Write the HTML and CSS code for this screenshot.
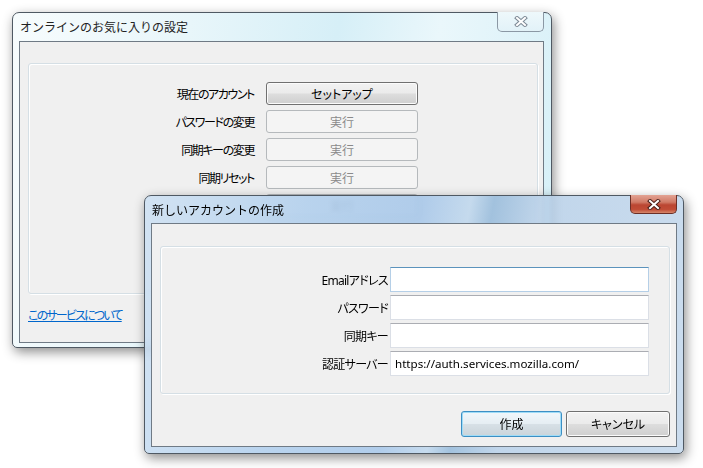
FILE: index.html
```html
<!DOCTYPE html>
<html lang="ja">
<head>
    <meta charset="UTF-8">
    <title>オンラインのお気に入りの設定</title>
    <link rel="stylesheet" href="styles.css">
</head>
<body>
    <div class="desktop">

        <!-- 設定ウィンドウ (非アクティブ) -->
        <div class="window back">
            <div class="title-bar">オンラインのお気に入りの設定</div>
            <div class="close-btn">
                <svg width="14" height="11" viewBox="0 0 14 11"><path class="x-out" d="M3 2 L11 9 M11 2 L3 9"/><path class="x-in" d="M3 2 L11 9 M11 2 L3 9"/></svg>
            </div>
            <div class="client">
                <div class="group">
                    <div class="form-grid settings">
                        <span class="label">現在のアカウント</span>
                        <button class="btn">セットアップ</button>
                        <span class="label">パスワードの変更</span>
                        <button class="btn" disabled>実行</button>
                        <span class="label">同期キーの変更</span>
                        <button class="btn" disabled>実行</button>
                        <span class="label">同期リセット</span>
                        <button class="btn" disabled>実行</button>
                        <span class="label"></span>
                        <button class="btn" disabled>実行</button>
                    </div>
                </div>
                <a class="link" href="#">このサービスについて</a>
            </div>
        </div>

        <!-- アカウント作成ダイアログ (アクティブ) -->
        <div class="window front">
            <div class="title-bar">新しいアカウントの作成</div>
            <div class="close-btn">
                <svg width="14" height="11" viewBox="0 0 14 11"><path class="x-out" d="M3 2 L11 9 M11 2 L3 9"/><path class="x-in" d="M3 2 L11 9 M11 2 L3 9"/></svg>
            </div>
            <div class="client">
                <div class="group">
                    <div class="form-grid account">
                        <span class="label">Emailアドレス</span>
                        <input class="field focus" type="text" value="">
                        <span class="label">パスワード</span>
                        <input class="field" type="password" value="">
                        <span class="label">同期キー</span>
                        <input class="field" type="text" value="">
                        <span class="label">認証サーバー</span>
                        <input class="field" type="text" value="https://auth.services.mozilla.com/">
                    </div>
                </div>
                <div class="actions">
                    <button class="btn default">作成</button>
                    <button class="btn cancel">キャンセル</button>
                </div>
            </div>
        </div>

    </div>
</body>
</html>
```

FILE: styles.css
```css
*{
    margin: 0;
    padding: 0;
    box-sizing: border-box;
}
body{
    font-family: "Noto Sans", "Noto Sans CJK JP", sans-serif;
    font-size: 12px;
    color: #000;
}
.desktop{
    width: 703px;
    height: 468px;
    position: relative;
    overflow: hidden;
    background: #fff;
}

/* window frame */
.window{
    position: absolute;
    display: flex;
    flex-direction: column;
    border: 1px solid #4f5963;
    border-radius: 7px 7px 5px 5px;
    box-shadow: 2px 4px 12px rgba(0,0,0,.45);
}
.back{
    left: 12px;
    top: 12px;
    width: 540px;
    height: 336px;
    background: linear-gradient(100deg, #f7fcfd 0%, #e8f6fa 30%, #d6eff7 55%, #eaf7fb 72%, #d4eff7 100%);
}
.front{
    left: 144px;
    top: 195px;
    width: 540px;
    height: 259px;
    background: linear-gradient(100deg, rgba(205,224,242,.88) 0%, rgba(176,206,236,.88) 28%, rgba(166,198,232,.88) 48%, rgba(190,214,236,.88) 56%, rgba(150,186,218,.88) 60%, rgba(184,208,232,.88) 68%, rgba(196,216,236,.88) 100%);
    backdrop-filter: blur(2px);
}
.title-bar{
    display: flex;
    align-items: center;
    padding-left: 7px;
    white-space: nowrap;
}
.back .title-bar{
    height: 28px;
    color: #222;
}
.front .title-bar{
    height: 27px;
}

/* close button */
.close-btn{
    position: absolute;
    top: -1px;
    width: 47px;
    display: flex;
    align-items: center;
    justify-content: center;
    border-radius: 0 0 5px 5px;
}
.close-btn svg{
    display: block;
}
.x-out{
    fill: none;
    stroke-width: 4;
    stroke-linecap: square;
}
.x-in{
    fill: none;
    stroke: #fff;
    stroke-width: 2;
    stroke-linecap: square;
}
.back .close-btn{
    right: 7px;
    height: 20px;
    border: 1px solid #8b98a4;
    border-top: none;
    background: linear-gradient(#eef8fb, #e2f2f8);
}
.back .x-out{
    stroke: #7d8a96;
}
.front .close-btn{
    right: 6px;
    height: 19px;
    border: 1px solid #6b2f27;
    border-top: none;
    background: linear-gradient(#e3a394 0%, #d07a66 40%, #bb4632 55%, #c04c36 80%, #d6876b 100%);
}
.front .x-out{
    stroke: #4a1f19;
}

/* client area */
.client{
    flex: 1;
    display: flex;
    flex-direction: column;
    background: #f0f0f0;
    border: 1px solid #6f7a85;
}
.back .client{
    margin: 0 7px 4px 6px;
    padding: 21px 5px 0 8px;
}
.front .client{
    margin: 0 6px 6px 6px;
    padding: 22px 6px 0 8px;
}
.group{
    border: 1px solid #d5dfe5;
    border-radius: 3px;
    box-shadow: inset 1px 1px 0 #fff, 1px 1px 0 #fff;
}
.back .group{
    height: 231px;
    padding-top: 18px;
}
.front .group{
    height: 148px;
    padding-top: 20px;
}

/* label / control rows */
.form-grid{
    display: grid;
    align-items: center;
}
.settings{
    grid-template-columns: 225px 152px;
    grid-auto-rows: 23px;
    column-gap: 12px;
    row-gap: 5px;
}
.account{
    grid-template-columns: 227px 259px;
    grid-auto-rows: 25px;
    column-gap: 2px;
    row-gap: 3px;
}
.label{
    text-align: right;
    white-space: nowrap;
    font-feature-settings: "palt";
}
.settings .label{
    letter-spacing: -1.4px;
}
.account .label{
    letter-spacing: -0.7px;
}

/* buttons */
.btn{
    height: 100%;
    font: inherit;
    font-feature-settings: "palt";
    color: #000;
    border: 1px solid #707070;
    border-radius: 3px;
    background: linear-gradient(#f2f2f2 0%, #ebebeb 48%, #dddddd 52%, #cfcfcf 100%);
    box-shadow: inset 0 0 0 1px #fbfbfb;
}
.btn:disabled{
    color: #8a8a8a;
    border-color: #b5b9bc;
    background: #f4f4f4;
    box-shadow: none;
}
.btn.default{
    border-color: #3c8fc4;
    box-shadow: inset 0 0 0 1px #9fdcf7;
    background: linear-gradient(#f1f7fb 0%, #e6eef3 48%, #d7e0e6 52%, #cad4da 100%);
}

/* text fields */
.field{
    height: 100%;
    font: inherit;
    font-size: 11.6px;
    padding: 0 4px;
    border: 1px solid #dbdfe6;
    border-top-color: #abadb3;
    background: #fff;
    outline: none;
}
.field.focus{
    border-color: #b5cfe7;
    border-top-color: #5c93bc;
}

.link{
    margin-top: 14px;
    align-self: flex-start;
    color: #0066cc;
    font-feature-settings: "palt";
    letter-spacing: -1.8px;
    line-height: 16px;
}
.actions{
    display: flex;
    justify-content: flex-end;
    gap: 4px;
    margin-top: 17px;
    height: 26px;
}
.actions .default{
    width: 101px;
}
.actions .cancel{
    width: 104px;
}
```
